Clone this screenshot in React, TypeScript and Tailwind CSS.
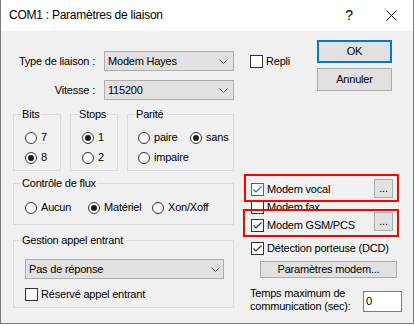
import React from "react";

const Radio = ({ checked }: { checked?: boolean }) => (
  <span className="w-[12px] h-[12px] rounded-full border border-[#333333] bg-white flex items-center justify-center shrink-0">
    {checked && <span className="w-[6px] h-[6px] rounded-full bg-[#1a1a1a]" />}
  </span>
);

const Check = ({ checked, blue }: { checked?: boolean; blue?: boolean }) => (
  <span
    className={
      blue
        ? "w-[13px] h-[13px] border border-[#0078d7] bg-white shrink-0 flex"
        : "w-[13px] h-[13px] border border-[#333333] bg-white shrink-0 flex"
    }
  >
    {checked && (
      <svg width="11" height="11" viewBox="0 0 11 11">
        <path
          d="M1.5 5.5 L4 8 L9.5 2.5"
          fill="none"
          stroke={blue ? "#0078d7" : "#333333"}
          strokeWidth="1.2"
        />
      </svg>
    )}
  </span>
);

const Chevron = () => (
  <svg width="9" height="5" viewBox="0 0 9 5" className="shrink-0">
    <path d="M0.5 0.5 L4.5 4.5 L8.5 0.5" fill="none" stroke="#606060" strokeWidth="1" />
  </svg>
);

const Combo = ({ value, className }: { value: string; className: string }) => (
  <div className={className}>
    <span className="flex-1">{value}</span>
    <Chevron />
  </div>
);

const Group = ({
  label,
  className,
  children,
}: {
  label: string;
  className: string;
  children: React.ReactNode;
}) => (
  <div className={className}>
    <span className="absolute -top-[7px] left-[7px] bg-[#f0f0f0] px-[1px] leading-[13px]">{label}</span>
    {children}
  </div>
);

const RadioItem = ({ checked, label, className }: { checked?: boolean; label: string; className?: string }) => (
  <div className={className ?? "flex items-center h-[13px]"}>
    <Radio checked={checked} />
    <span className="ml-[4px]">{label}</span>
  </div>
);

const Dots = ({ className }: { className: string }) => (
  <div className={className}>...</div>
);

export default function App() {
  return (
    <div className="w-[414px] h-[324px] bg-[#f0f0f0] border-x border-b border-[#7a7a7a] text-black text-[11px] leading-[13px] tracking-[-0.2px] font-['Liberation_Sans',Arial,sans-serif] flex flex-col overflow-hidden">
      {/* Title bar */}
      <div className="h-[31px] bg-white flex items-center shrink-0">
        <span className="ml-[8px] text-[12px] tracking-[-0.25px] flex-1">COM1 : Paramètres de liaison</span>
        <span className="text-[14px] tracking-normal mr-[33px]">?</span>
        <svg width="11" height="11" viewBox="0 0 11 11" className="mr-[16px]">
          <path d="M0.5 0.5 L10.5 10.5 M10.5 0.5 L0.5 10.5" stroke="#000" strokeWidth="1" />
        </svg>
      </div>

      {/* Body */}
      <div className="flex flex-1">
        {/* Left column */}
        <div className="ml-[12px] w-[221px] flex flex-col">
          <div className="mt-[20px] flex items-center h-[20px]">
            <span className="w-[84px] text-right">Type de liaison :</span>
            <Combo
              value="Modem Hayes"
              className="ml-[9px] w-[130px] h-[20px] shrink-0 bg-[#e1e1e1] border border-[#adadad] flex items-center pl-[3px] pr-[5px]"
            />
          </div>
          <div className="mt-[9px] flex items-center h-[20px]">
            <span className="w-[84px] text-right">Vitesse :</span>
            <Combo
              value="115200"
              className="ml-[9px] w-[130px] h-[20px] shrink-0 bg-[#e1e1e1] border border-[#adadad] flex items-center pl-[3px] pr-[5px]"
            />
          </div>

          <div className="mt-[14px] flex gap-[9px] h-[57px]">
            <Group label="Bits" className="relative w-[48px] border border-[#dcdcdc] flex flex-col pl-[11px] pt-[16px] gap-[7px]">
              <RadioItem label="7" />
              <RadioItem label="8" checked />
            </Group>
            <Group label="Stops" className="relative w-[48px] border border-[#dcdcdc] flex flex-col pl-[11px] pt-[16px] gap-[7px]">
              <RadioItem label="1" checked />
              <RadioItem label="2" />
            </Group>
            <Group label="Parité" className="relative w-[107px] border border-[#dcdcdc] flex flex-col pl-[10px] pt-[16px] gap-[7px]">
              <div className="flex">
                <RadioItem label="paire" className="flex items-center h-[13px] w-[52px]" />
                <RadioItem label="sans" checked />
              </div>
              <RadioItem label="impaire" />
            </Group>
          </div>

          <Group label="Contrôle de flux" className="relative mt-[12px] h-[42px] border border-[#dcdcdc] flex pl-[11px] pt-[17px]">
            <RadioItem label="Aucun" className="flex items-center h-[13px] w-[63px]" />
            <RadioItem label="Matériel" checked className="flex items-center h-[13px] w-[64px]" />
            <RadioItem label="Xon/Xoff" />
          </Group>

          <Group label="Gestion appel entrant" className="relative mt-[15px] h-[68px] border border-[#dcdcdc] flex flex-col pl-[11px] pt-[18px]">
            <Combo
              value="Pas de réponse"
              className="w-[199px] h-[20px] bg-[#e1e1e1] border border-[#adadad] flex items-center pl-[3px] pr-[3px]"
            />
            <div className="mt-[9px] flex items-center h-[13px]">
              <Check />
              <span className="ml-[3px]">Réservé appel entrant</span>
            </div>
          </Group>
        </div>

        {/* Right column */}
        <div className="relative ml-[10px] w-[169px] flex flex-col">
          <div className="mt-[9px] flex">
            <div className="ml-[6px] w-[67px] pt-[15px]">
              <div className="flex items-center h-[13px]">
                <Check />
                <span className="ml-[3px]">Repli</span>
              </div>
            </div>
            <div className="w-[75px] flex flex-col">
              <div className="h-[23px] bg-[#e1e1e1] border-2 border-[#0078d7] flex items-center justify-center">OK</div>
              <div className="mt-[5px] h-[23px] bg-[#e1e1e1] border border-[#adadad] flex items-center justify-center">Annuler</div>
            </div>
          </div>

          <div className="mt-[92px] ml-[7px] w-[142px] h-[13px] flex items-center">
            <Check checked blue />
            <span className="ml-[3px]">Modem vocal</span>
            <Dots className="ml-auto mb-[2px] w-[19px] h-[19px] bg-[#e1e1e1] border border-[#adadad] flex items-center justify-center" />
          </div>
          <div className="mt-[5px] ml-[7px] w-[142px] h-[13px] flex items-center">
            <Check />
            <span className="ml-[3px]">Modem fax</span>
          </div>
          <div className="mt-[5px] ml-[7px] w-[142px] h-[13px] flex items-center">
            <Check checked />
            <span className="ml-[3px]">Modem GSM/PCS</span>
            <Dots className="ml-auto mb-[8px] w-[19px] h-[19px] bg-[#e1e1e1] border border-[#adadad] flex items-center justify-center" />
          </div>
          <div className="mt-[10px] ml-[7px] h-[13px] flex items-center">
            <Check checked />
            <span className="ml-[3px]">Détection porteuse (DCD)</span>
          </div>
          <div className="mt-[6px] ml-[16px] w-[137px] h-[17px] bg-[#e1e1e1] border border-[#adadad] flex items-center justify-center">
            Paramètres modem...
          </div>
          <div className="mt-[9px] ml-[6px] flex items-start">
            <div className="w-[113px]">
              <div>Temps maximum de</div>
              <div>communication (sec):</div>
            </div>
            <div className="mt-[4px] w-[39px] h-[21px] bg-white border border-[#7a7a7a] flex items-center pl-[2px]">0</div>
          </div>

          {/* Red annotation boxes */}
          <div className="absolute left-0 top-[143px] w-[155px] h-[28px] border-2 border-[#ff0000]" />
          <div className="absolute -left-[1px] top-[178px] w-[156px] h-[28px] border-2 border-[#ff0000]" />
        </div>
      </div>
    </div>
  );
}
